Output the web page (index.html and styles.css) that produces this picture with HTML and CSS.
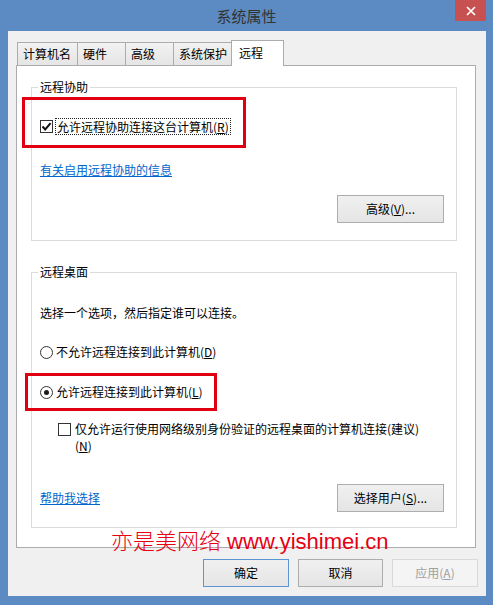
FILE: index.html
```html
<!DOCTYPE html>
<html lang="zh-CN">
<head>
<meta charset="utf-8">
<title>系统属性</title>
<link rel="stylesheet" href="styles.css">
</head>
<body>
<div class="window">
  <div class="titlebar">
    <div class="title">系统属性</div>
    <div class="close">
      <svg width="10" height="10" viewBox="0 0 10 10"><path d="M1 1 L9 9 M9 1 L1 9" stroke="#fff" stroke-width="1.7" fill="none"/></svg>
    </div>
  </div>
  <div class="client">
    <div class="tabs">
      <div class="tab t1">计算机名</div>
      <div class="tab t2">硬件</div>
      <div class="tab t3">高级</div>
      <div class="tab t4">系统保护</div>
      <div class="tab active">远程</div>
    </div>
    <div class="panel">
      <fieldset class="group g1">
        <legend>远程协助</legend>
        <div class="check-row">
          <span class="cb">
            <svg width="11" height="11" viewBox="0 0 11 11"><path d="M1.5 5.5 L4.2 8.4 L9.6 2.2" stroke="#111" stroke-width="2" fill="none"/></svg>
          </span>
          <span class="focus">允许远程协助连接这台计算机(<u>R</u>)</span>
        </div>
        <a class="link l1">有关启用远程协助的信息</a>
        <div class="btn-row">
          <button class="btn">高级(<u>V</u>)...</button>
        </div>
      </fieldset>
      <fieldset class="group g2">
        <legend>远程桌面</legend>
        <div class="desc">选择一个选项，然后指定谁可以连接。</div>
        <div class="radio-row">
          <span class="rb"></span>
          <span class="rlabel">不允许远程连接到此计算机(<u>D</u>)</span>
        </div>
        <div class="radio-row">
          <span class="rb on"></span>
          <span class="rlabel">允许远程连接到此计算机(<u>L</u>)</span>
        </div>
        <div class="sub-check">
          <span class="cb small"></span>
          <span class="sublabel">仅允许运行使用网络级别身份验证的远程桌面的计算机连接(建议)<br>(<u>N</u>)</span>
        </div>
        <div class="help-row">
          <a class="link">帮助我选择</a>
          <button class="btn">选择用户(<u>S</u>)...</button>
        </div>
      </fieldset>
    </div>
    <div class="footer">
      <button class="btn fbtn default">确定</button>
      <button class="btn fbtn w85">取消</button>
      <button class="btn fbtn disabled">应用(<u>A</u>)</button>
    </div>
  </div>
  <div class="mark m1"></div>
  <div class="mark m2"></div>
  <div class="watermark">亦是美网络 www.yishimei.cn</div>
</div>
</body>
</html>
```
FILE: styles.css
```css
* { box-sizing: border-box; }
html, body { margin: 0; padding: 0; }
body {
  width: 493px;
  height: 605px;
  overflow: hidden;
  font-family: "Noto Sans CJK SC", "Microsoft YaHei", sans-serif;
  font-size: 12px;
  color: #000;
}
.window {
  position: relative;
  width: 493px;
  height: 605px;
  background: #5b8bc2;
}
.titlebar {
  height: 31px;
  display: grid;
  grid-template-columns: 1fr auto 1fr;
  align-items: start;
}
.title {
  grid-column: 2;
  font-size: 15px;
  line-height: 32px;
  color: #333;
}
.close {
  grid-column: 3;
  justify-self: end;
  width: 31px;
  height: 21px;
  margin-right: 7px;
  background: #c75050;
  display: flex;
  align-items: center;
  justify-content: center;
}
.client {
  margin: 0 7px 0 8px;
  height: 565px;
  background: #f0f0f0;
  padding-top: 9px;
}
.tabs {
  display: flex;
  align-items: flex-end;
  height: 25px;
  padding-left: 9px;
}
.tab {
  height: 23px;
  border: 1px solid #acacac;
  border-bottom: none;
  background: linear-gradient(#f2f2f2, #e5e5e5);
  padding-left: 5px;
  line-height: 22px;
  margin-right: -1px;
  white-space: nowrap;
}
.t1 { width: 61px; }
.t2 { width: 49px; }
.t3 { width: 49px; }
.t4 { width: 59px; }
.tab.active {
  width: 53px;
  height: 26px;
  margin-bottom: -1px;
  background: #fff;
  position: relative;
  z-index: 1;
  padding-left: 7px;
  line-height: 24px;
}
.panel {
  margin-left: 8px;
  width: 460px;
  height: 483px;
  background: #fff;
  border: 1px solid #acacac;
  padding: 13px 18px 0 14px;
}
.group {
  margin: 0;
  width: 426px;
  min-width: 0;
  border: 1px solid #dcdcdc;
  padding: 0 12px 17px 8px;
}
.group legend {
  padding: 0 2px;
  margin-left: -2px;
  line-height: 16px;
  font-size: 12px;
}
.g2 { margin-top: 23px; padding-bottom: 15px; }
.check-row {
  margin-top: 22px;
  height: 18px;
  display: flex;
  align-items: center;
}
.cb {
  flex: none;
  width: 13px;
  height: 13px;
  border: 1px solid #333;
  background: #fff;
  display: flex;
  align-items: center;
  justify-content: center;
}
.focus {
  margin-left: 2px;
  border: 1px dotted #222;
  padding: 0 1px;
  line-height: 15px;
  white-space: nowrap;
}
.link {
  display: block;
  width: max-content;
  color: #0066cc;
  text-decoration: underline;
  line-height: 16px;
}
.l1 { margin-top: 27px; }
.btn-row {
  margin-top: 17px;
  display: flex;
  justify-content: flex-end;
}
.btn {
  width: 107px;
  height: 28px;
  border: 1px solid #adadad;
  background: linear-gradient(#f0f0f0, #e5e5e5);
  font-family: inherit;
  font-size: 12px;
  color: #000;
  padding: 0;
  margin: 0;
  line-height: 16px;
}
.desc { margin-top: 25px; line-height: 16px; }
.radio-row {
  margin-top: 22px;
  height: 18px;
  display: flex;
  align-items: center;
}
.rb {
  flex: none;
  width: 13px;
  height: 13px;
  border: 1px solid #333;
  border-radius: 50%;
  background: #fff;
  display: flex;
  align-items: center;
  justify-content: center;
}
.rb.on::after {
  content: "";
  width: 5px;
  height: 5px;
  border-radius: 50%;
  background: #1a1a1a;
}
.rlabel { margin-left: 3px; line-height: 16px; white-space: nowrap; }
.sub-check {
  margin-top: 19px;
  margin-left: 18px;
  display: flex;
  align-items: flex-start;
}
.cb.small { margin-top: 3px; }
.sublabel { margin-left: 4px; line-height: 17px; }
.help-row {
  margin-top: 30px;
  height: 28px;
  display: flex;
  align-items: center;
  justify-content: space-between;
}
.footer {
  margin-top: 11px;
  display: flex;
  justify-content: flex-end;
  gap: 9px;
  padding-right: 8px;
}
.fbtn { width: 86px; height: 28px; }
.fbtn.w85 { width: 85px; }
.fbtn.default { border-color: #5b96d2; }
.fbtn.disabled {
  border-color: #d9d9d9;
  background: #f4f4f4;
  color: #a0a0a0;
}
.mark {
  position: absolute;
  border: 3px solid #e00012;
}
.m1 { left: 22px; top: 97px; width: 224px; height: 51px; }
.m2 { left: 25px; top: 373px; width: 192px; height: 38px; }
.watermark {
  position: absolute;
  left: 111px;
  top: 529px;
  font-family: "Liberation Sans", "Noto Sans CJK SC", sans-serif;
  font-size: 22px;
  font-weight: 300;
  line-height: 26px;
  color: #e60012;
  white-space: nowrap;
}
```
